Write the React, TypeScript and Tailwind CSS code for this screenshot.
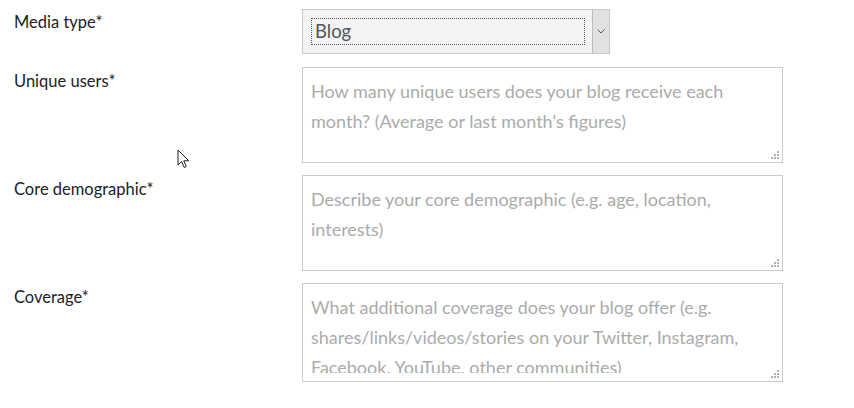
import React from "react";

const font = { fontFamily: '"Lato", "Liberation Sans", sans-serif' };

function Grip() {
  return (
    <svg className="absolute right-[3px] bottom-[3px]" width="8" height="8" viewBox="0 0 8 8">
      <rect x="6" y="0" width="2" height="2" fill="#b0b0b0" />
      <rect x="3" y="3" width="2" height="2" fill="#b0b0b0" />
      <rect x="6" y="3" width="2" height="2" fill="#b0b0b0" />
      <rect x="0" y="6" width="2" height="2" fill="#b0b0b0" />
      <rect x="3" y="6" width="2" height="2" fill="#b0b0b0" />
      <rect x="6" y="6" width="2" height="2" fill="#b0b0b0" />
    </svg>
  );
}

function Area({ text, inner }: { text: string; inner: string }) {
  return (
    <div className="relative w-[481px] border border-[#cbcbcb] bg-white px-2 py-2">
      <div className={`${inner} overflow-hidden text-[18px] leading-[30px] text-[#ababab]`}>{text}</div>
      <Grip />
    </div>
  );
}

export default function App() {
  return (
    <main className="relative h-[408px] w-[854px] bg-white text-[16.5px] text-[#222]" style={font}>
      <div className="grid grid-cols-[288px_481px] pl-[14px] pt-[9px]">
        <label className="pt-[1px] leading-[24px]">Media type*</label>
        <div className="mb-[13px] flex h-[45px] w-[308px] border border-[#c8c8c8] bg-[#f3f3f3]">
          <div className="flex flex-1 items-stretch py-[8px] pl-[8px] pr-[7px]">
            <div className="flex flex-1 items-center border border-dotted border-[#555] pl-[3px] text-[18.5px] text-[#555]">
              Blog
            </div>
          </div>
          <div className="flex w-[17px] items-center justify-center border-l border-[#bdbdbd] bg-[#e1e1e1]">
            <svg width="8" height="5" viewBox="0 0 8 5">
              <path d="M0.5 0.5 L4 4 L7.5 0.5" fill="none" stroke="#555" strokeWidth="1" />
            </svg>
          </div>
        </div>

        <label className="pt-[2px] leading-[24px]">Unique users*</label>
        <div className="mb-[12px]">
          <Area
            inner="h-[78px]"
            text="How many unique users does your blog receive each month? (Average or last month's figures)"
          />
        </div>

        <label className="pt-[2px] leading-[24px]">Core demographic*</label>
        <div className="mb-[12px]">
          <Area inner="h-[78px]" text="Describe your core demographic (e.g. age, location, interests)" />
        </div>

        <label className="pt-[2px] leading-[24px]">Coverage*</label>
        <div>
          <Area
            inner="h-[81px]"
            text="What additional coverage does your blog offer (e.g. shares/links/videos/stories on your Twitter, Instagram, Facebook. YouTube. other communities)"
          />
        </div>
      </div>

      <svg className="absolute left-[177px] top-[149px]" width="14" height="20" viewBox="0 0 14 20">
        <path d="M1 1 L1 16 L4.6 12.4 L7.2 18.5 L9.3 17.6 L6.8 11.8 L11.8 11.8 Z" fill="#fff" stroke="#222" strokeWidth="1" strokeLinejoin="round" />
      </svg>
    </main>
  );
}
